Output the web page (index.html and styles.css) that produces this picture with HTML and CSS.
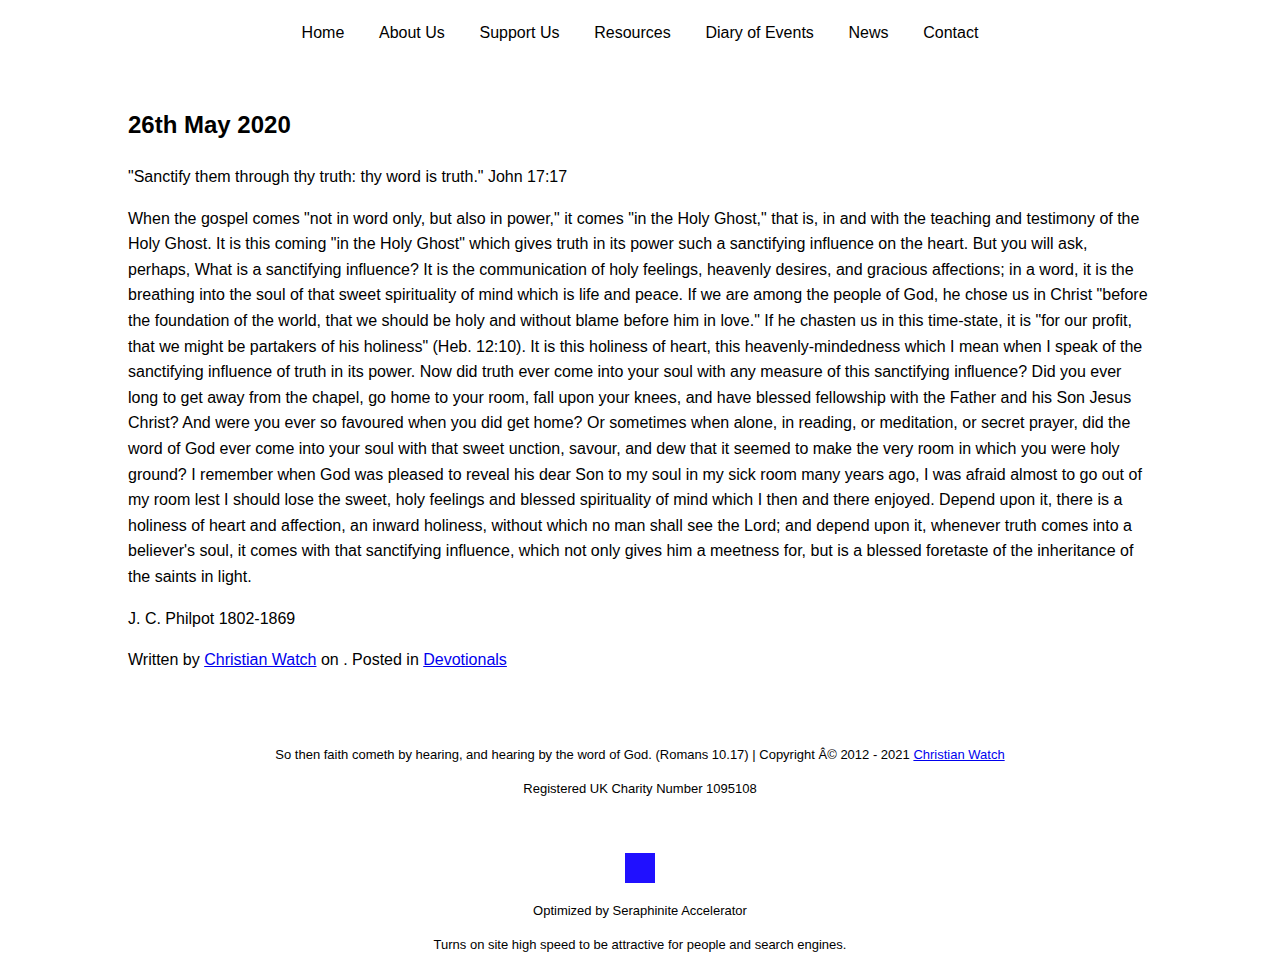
FILE: index.html
```html
<!DOCTYPE html>
<html lang="en">
<head>
<meta charset="utf-8">
<title>26th May 2020 - Christian Watch</title>
<link rel="stylesheet" href="styles.css">
</head>
<body>
<header class="site-header">
  <nav class="main-nav">
    <a class="nav-link" href="#">Home</a>
    <a class="nav-link" href="#">About Us</a>
    <a class="nav-link" href="#">Support Us</a>
    <a class="nav-link" href="#">Resources</a>
    <a class="nav-link" href="#">Diary of Events</a>
    <a class="nav-link" href="#">News</a>
    <a class="nav-link" href="#">Contact</a>
  </nav>
</header>
<main class="content">
  <h2 class="post-title">26th May 2020</h2>
  <p>"Sanctify them through thy truth: thy word is truth." John 17:17</p>
  <p>When the gospel comes "not in word only, but also in power," it comes "in the Holy Ghost," that is, in and with the teaching and testimony of the Holy Ghost. It is this coming "in the Holy Ghost" which gives truth in its power such a sanctifying influence on the heart. But you will ask, perhaps, What is a sanctifying influence? It is the communication of holy feelings, heavenly desires, and gracious affections; in a word, it is the breathing into the soul of that sweet spirituality of mind which is life and peace. If we are among the people of God, he chose us in Christ "before the foundation of the world, that we should be holy and without blame before him in love." If he chasten us in this time-state, it is "for our profit, that we might be partakers of his holiness" (Heb. 12:10). It is this holiness of heart, this heavenly-mindedness which I mean when I speak of the sanctifying influence of truth in its power. Now did truth ever come into your soul with any measure of this sanctifying influence? Did you ever long to get away from the chapel, go home to your room, fall upon your knees, and have blessed fellowship with the Father and his Son Jesus Christ? And were you ever so favoured when you did get home? Or sometimes when alone, in reading, or meditation, or secret prayer, did the word of God ever come into your soul with that sweet unction, savour, and dew that it seemed to make the very room in which you were holy ground? I remember when God was pleased to reveal his dear Son to my soul in my sick room many years ago, I was afraid almost to go out of my room lest I should lose the sweet, holy feelings and blessed spirituality of mind which I then and there enjoyed. Depend upon it, there is a holiness of heart and affection, an inward holiness, without which no man shall see the Lord; and depend upon it, whenever truth comes into a believer's soul, it comes with that sanctifying influence, which not only gives him a meetness for, but is a blessed foretaste of the inheritance of the saints in light.</p>
  <p>J. C. Philpot 1802-1869</p>
  <p>Written by <a href="#">Christian Watch</a> on . Posted in <a href="#">Devotionals</a></p>
</main>
<footer class="site-footer">
  <p>So then faith cometh by hearing, and hearing by the word of God. (Romans 10.17) | Copyright Â© 2012 - 2021 <a href="#">Christian Watch</a></p>
  <p>Registered UK Charity Number 1095108</p>
  <div class="optimizer">
    <div class="opt-logo"></div>
    <p>Optimized by Seraphinite Accelerator</p>
    <p>Turns on site high speed to be attractive for people and search engines.</p>
  </div>
</footer>
</body>
</html>
```

FILE: styles.css
```css
html, body {
  margin: 0;
  padding: 0;
  background: #ffffff;
}

body {
  font-family: "Liberation Sans", Arial, sans-serif;
  color: #000000;
  font-size: 16px;
}

a {
  color: #0000ee;
}

.site-header {
  padding: 23px 0 21px;
}

.main-nav {
  display: flex;
  justify-content: center;
  gap: 34.7px;
  line-height: 20px;
}

.nav-link {
  color: #000000;
  text-decoration: none;
}

.content {
  width: 1024px;
  margin: 0 auto;
  padding-top: 46px;
  display: flow-root;
}

.post-title {
  font-size: 24px;
  font-weight: bold;
  line-height: 29px;
  margin: 0 0 25px;
}

.content p {
  line-height: 25.6px;
  margin: 0 0 16px;
}

.site-footer {
  display: flow-root;
  padding-top: 56px;
  text-align: center;
  font-size: 13px;
}

.site-footer p {
  line-height: 20.8px;
  margin: 0 0 14px;
}

.optimizer {
  padding-top: 39px;
}

.optimizer p {
  margin: 0 0 13px;
}

.opt-logo {
  width: 30px;
  height: 30px;
  background: #2010ff;
  margin: 0 auto 18px;
}
```
